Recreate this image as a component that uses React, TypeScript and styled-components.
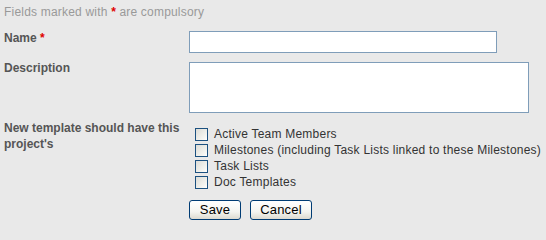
import styled, { createGlobalStyle } from 'styled-components';

const GlobalStyle = createGlobalStyle`
  html, body {
    margin: 0;
    padding: 0;
    background: #e9e9e9;
    overflow: hidden;
  }
  body {
    font-family: 'Liberation Sans', Arial, sans-serif;
  }
`;

const Form = styled.form`
  width: 546px;
  height: 227px;
  box-sizing: border-box;
  padding: 5px 0 0 4px;
  background: #e9e9e9;
`;

const Intro = styled.p`
  margin: 0 0 12px;
  font-size: 12px;
  line-height: 14px;
  letter-spacing: 0.2px;
  color: #999;
`;

const Required = styled.span`
  color: #e00000;
  font-weight: bold;
  letter-spacing: 0;
`;

const Row = styled.div<{ $gap?: number }>`
  display: grid;
  grid-template-columns: 185px 1fr;
  align-items: start;
  margin-bottom: ${({ $gap = 9 }) => $gap}px;
`;

const Label = styled.label<{ $shift?: number }>`
  margin-top: ${({ $shift = 0 }) => $shift}px;
  font-size: 12px;
  line-height: 16px;
  font-weight: bold;
  color: #555;
`;

const TextInput = styled.input`
  display: block;
  width: 308px;
  height: 22px;
  box-sizing: border-box;
  margin: 0;
  border: 1px solid #7f9db9;
  background: #fff;
  font: 12px 'Liberation Sans', Arial, sans-serif;
  padding: 2px 3px;
`;

const TextArea = styled.textarea`
  display: block;
  width: 340px;
  height: 51px;
  box-sizing: border-box;
  margin: 0;
  border: 1px solid #7f9db9;
  background: #fff;
  resize: none;
  font: 12px 'Liberation Sans', Arial, sans-serif;
  padding: 2px 3px;
`;

const CheckList = styled.div`
  display: flex;
  flex-direction: column;
  padding: 6px 0 0 6px;
`;

const CheckItem = styled.label`
  display: flex;
  align-items: center;
  gap: 6px;
  height: 16px;
  font-size: 12px;
  letter-spacing: 0.23px;
  color: #333;
  white-space: nowrap;
`;

const Box = styled.input`
  appearance: none;
  flex: none;
  width: 13px;
  height: 13px;
  margin: 0;
  box-sizing: border-box;
  border: 1px solid #1c5180;
  background: linear-gradient(135deg, #dcdcd7 0%, #f3f3ef 70%, #ffffff 100%);
`;

const Actions = styled.div`
  display: flex;
  gap: 9px;
  padding-left: 185px;
`;

const Button = styled.button<{ $width: number }>`
  width: ${({ $width }) => $width}px;
  height: 20px;
  box-sizing: border-box;
  padding: 0;
  border: 1px solid #003c74;
  border-radius: 3px;
  background: linear-gradient(#ffffff 0%, #f4f4f0 60%, #dcdad0 100%);
  font: 13px 'Liberation Sans', Arial, sans-serif;
  letter-spacing: 0.2px;
  color: #000;
  line-height: 18px;
`;

const options = [
  'Active Team Members',
  'Milestones (including Task Lists linked to these Milestones)',
  'Task Lists',
  'Doc Templates',
];

export default function App() {
  return (
    <>
      <GlobalStyle />
      <Form onSubmit={(e) => e.preventDefault()}>
        <Intro>
          Fields marked with <Required>*</Required> are compulsory
        </Intro>
        <Row>
          <Label $shift={-1}>
            Name <Required>*</Required>
          </Label>
          <TextInput type="text" />
        </Row>
        <Row $gap={7}>
          <Label $shift={-2}>Description</Label>
          <TextArea />
        </Row>
        <Row $gap={10}>
          <Label>New template should have this project's</Label>
          <CheckList>
            {options.map((o) => (
              <CheckItem key={o}>
                <Box type="checkbox" />
                {o}
              </CheckItem>
            ))}
          </CheckList>
        </Row>
        <Actions>
          <Button type="submit" $width={52}>
            Save
          </Button>
          <Button type="button" $width={62}>
            Cancel
          </Button>
        </Actions>
      </Form>
    </>
  );
}
